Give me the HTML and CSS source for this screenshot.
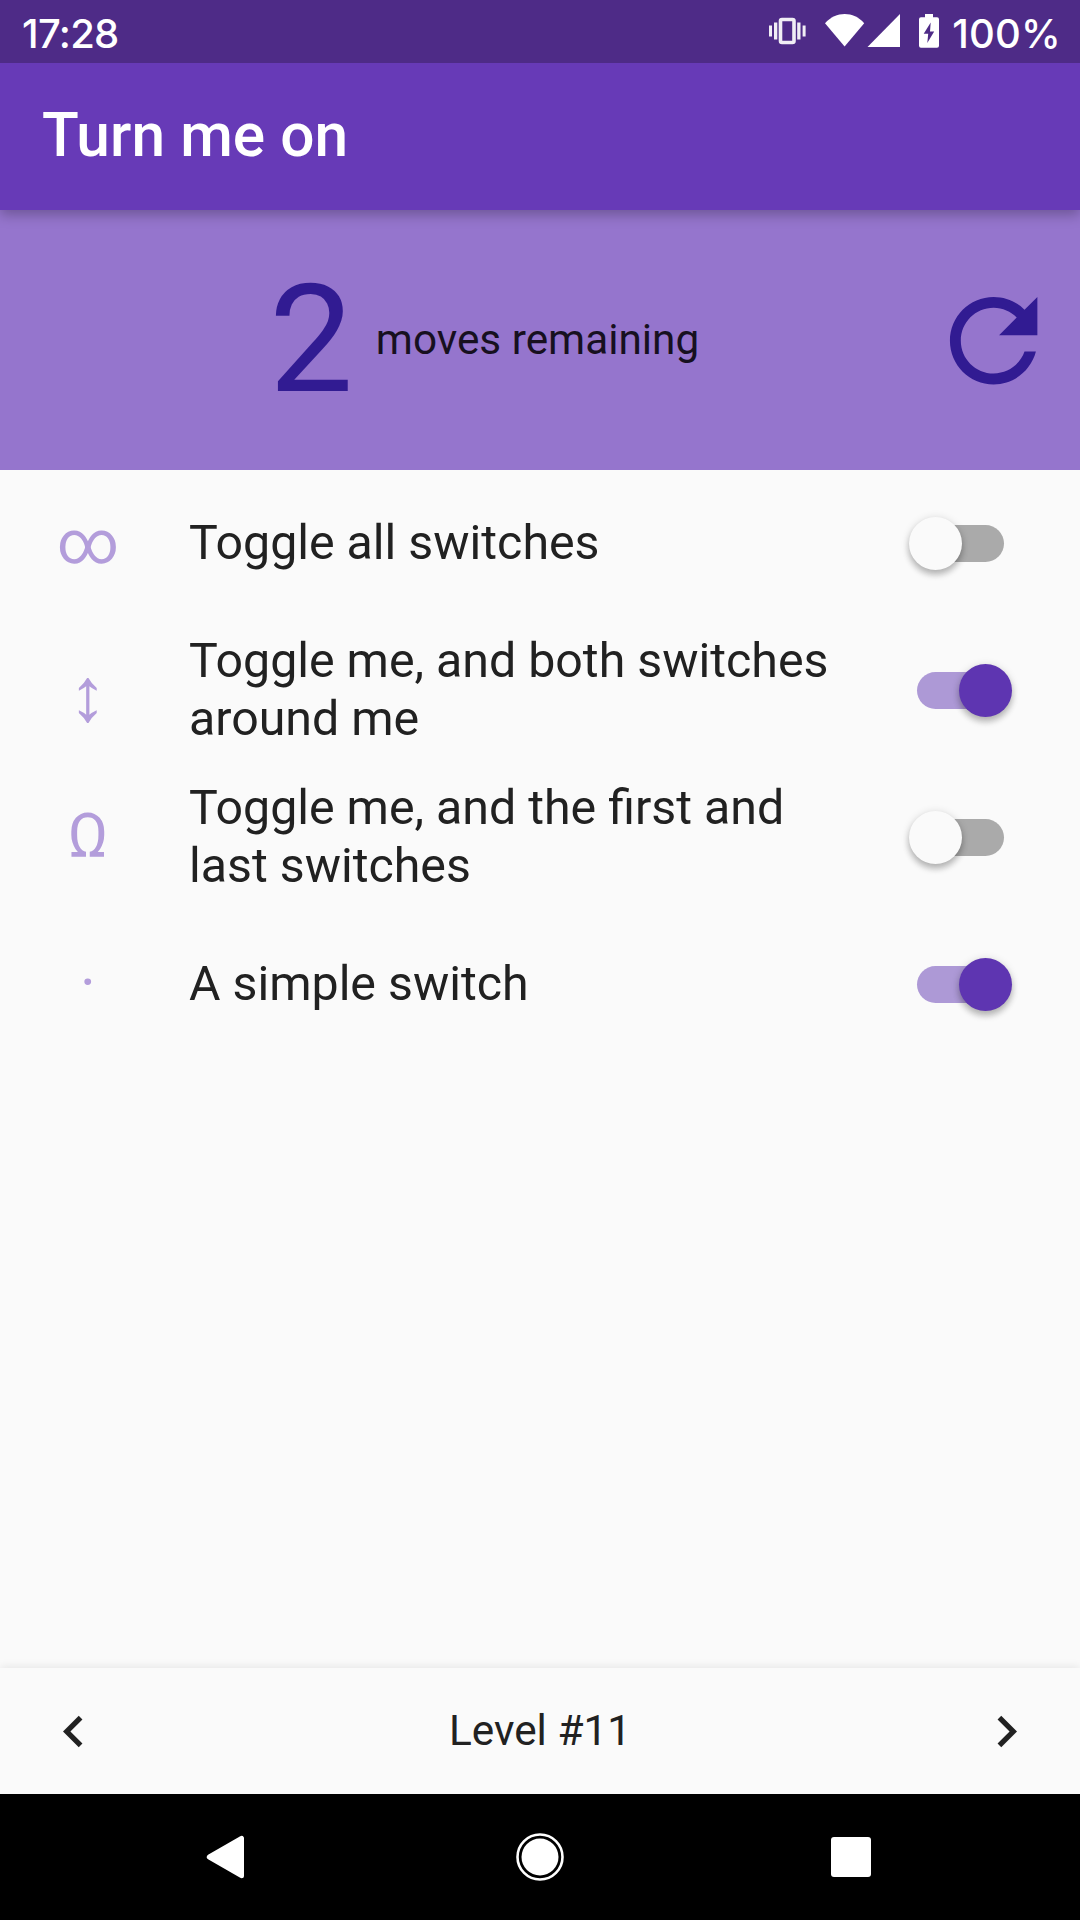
FILE: index.html
```html
<!DOCTYPE html>
<html lang="en">
<head>
<meta charset="utf-8">
<title>Turn me on</title>
<link rel="stylesheet" href="styles.css">
</head>
<body>
<div class="screen">
  <div class="status-bar">
    <span class="clock">17:28</span>
    <svg class="status-icons" width="180" height="63" viewBox="765 0 180 63" fill="#fff">
      <g opacity=".92">
        <rect x="770" y="25.500" width="3" height="11"/>
        <rect x="775" y="22.500" width="3.300" height="17"/>
        <rect x="781.500" y="19.500" width="13.500" height="23" rx="1.500" fill="none" stroke="#fff" stroke-width="3.600"/>
        <rect x="798.200" y="22.500" width="3.300" height="17"/>
        <rect x="803.600" y="25.500" width="3" height="11"/>
      </g>
      <path d="M826 23.300C837 11 854.500 11 865.200 23.300L845.600 46.500z"/>
      <path d="M901 14v33h-32.500z"/>
      <path fill-rule="evenodd" d="M926 14h8v3.300h4q2 0 2 2v26.500q0 2-2 2h-16q-2 0-2-2V19.300q0-2 2-2h4zM931.700 22.500l-7 11.300h4.500l-.9 9.200 6.900-11.600h-4.200z"/>
    </svg>
    <span class="battery-level">100%</span>
  </div>
  <header class="app-bar"><h1 class="title">Turn me on</h1></header>
  <section class="moves">
    <div class="counter"><span class="count">2</span><span class="caption">moves remaining</span></div>
    <svg class="refresh" viewBox="0 0 24 24"><path d="M17.650 6.350C16.200 4.900 14.210 4 12 4c-4.420 0-7.990 3.580-7.990 8s3.570 8 7.990 8c3.730 0 6.840-2.550 7.730-6h-2.080c-.82 2.330-3.040 4-5.650 4-3.310 0-6-2.690-6-6s2.690-6 6-6c1.660 0 3.140.69 4.220 1.780L13 11h7V4z"/></svg>
  </section>
  <main class="switches">
    <div class="row"><span class="symbol">∞</span><span class="label">Toggle all switches</span><span class="switch"><i class="thumb"></i></span></div>
    <div class="row"><span class="symbol arrow">↕</span><span class="label">Toggle me, and both switches around me</span><span class="switch on"><i class="thumb"></i></span></div>
    <div class="row"><span class="symbol">Ω</span><span class="label">Toggle me, and the first and last switches</span><span class="switch"><i class="thumb"></i></span></div>
    <div class="row"><span class="symbol">·</span><span class="label">A simple switch</span><span class="switch on"><i class="thumb"></i></span></div>
  </main>
  <footer class="level-bar">
    <svg class="chevron" viewBox="0 0 24 24"><path d="M15.410 7.410L14 6l-6 6 6 6 1.410-1.410L10.830 12z"/></svg>
    <span class="level">Level #11</span>
    <svg class="chevron" viewBox="0 0 24 24"><path d="M10 6L8.590 7.410 13.170 12l-4.580 4.590L10 18l6-6z"/></svg>
  </footer>
  <nav class="nav-bar">
    <svg class="nav-icon" viewBox="0 0 52 52"><path d="M6.300 26L38.500 7.300v37.400z" stroke="#fff" stroke-width="5" stroke-linejoin="round"/></svg>
    <svg class="nav-icon" viewBox="0 0 52 52"><circle cx="26" cy="26" r="18.500"/><circle cx="26" cy="26" r="22.500" fill="none" stroke="#fff" stroke-width="2.600"/></svg>
    <svg class="nav-icon" viewBox="0 0 52 52"><rect x="6" y="6" width="40" height="40" rx="3"/></svg>
  </nav>
</div>
</body>
</html>
```
FILE: styles.css
```css
* { box-sizing: border-box; }
body { margin: 0; font-family: Roboto, sans-serif; color: #212121; }
.screen { width: 1080px; height: 1920px; display: flex; flex-direction: column; background: #fafafa; overflow: hidden; }

.status-bar { height: 63px; flex: none; display: flex; align-items: center; padding: 4px 19px 0 22px; background: #4e2b87; color: #fff; font: 500 40px/1 Inter, sans-serif; z-index: 2; }
.clock { letter-spacing: -.7px; }
.battery-level { letter-spacing: .2px; }
.status-icons { margin: -4px 8px 0 auto; }

.app-bar { height: 147px; flex: none; display: flex; align-items: center; padding-left: 42px; background: #673ab7; color: #fff; z-index: 1; box-shadow: 0 5px 12px rgba(0, 0, 0, .26); }
.title { margin: 0; font-size: 60.4px; line-height: 1; font-weight: 500; letter-spacing: .05px; }

.moves { height: 259.500px; flex: none; display: flex; align-items: center; justify-content: space-between; padding: 1px 21px 0 269px; background: #9575cd; }
.counter { display: flex; align-items: center; gap: 22.500px; margin-top: -1px; }
.count { font-size: 150px; line-height: 1; color: #311b92; }
.caption { font-size: 42.3px; color: #17101f; }
.refresh { width: 131.250px; height: 131.250px; fill: #311b92; }

.switches { flex: 1; min-height: 0; }
.row { height: 147px; display: flex; align-items: center; padding: 0 76px 0 42px; }
.symbol { width: 91px; padding-left: 1px; text-align: center; font-size: 60.4px; line-height: 1; color: #b39ddb; }
.arrow { padding-top: 10px; font-family: "Liberation Serif", serif; font-size: 76px; }
.label { flex: 1; padding-left: 56px; font-size: 48.3px; line-height: 58px; padding-right: 60px; }
.switch { position: relative; flex: none; width: 87px; height: 37px; border-radius: 19px; background: #aaa; }
.thumb { position: absolute; left: -8px; top: -8px; width: 53px; height: 53px; border-radius: 50%; background: #fafafa; box-shadow: 0 5px 6px rgba(0, 0, 0, .22), 0 1px 8px rgba(0, 0, 0, .14); }
.on { background: #ad99d6; }
.on .thumb { left: 42px; background: #5e35b1; }

.level-bar { height: 126px; flex: none; display: flex; align-items: center; justify-content: space-between; padding: 0 42px; background: #fafafa; box-shadow: 0 -1px 9px rgba(0, 0, 0, .09); }
.level { padding-bottom: 2px; font-size: 42.3px; }
.chevron { width: 63px; height: 63px; fill: #212121; }

.nav-bar { height: 126px; flex: none; display: flex; align-items: center; justify-content: space-between; padding: 0 203px; background: #000; z-index: 1; }
.nav-icon { width: 52px; height: 52px; fill: #fff; }
```
